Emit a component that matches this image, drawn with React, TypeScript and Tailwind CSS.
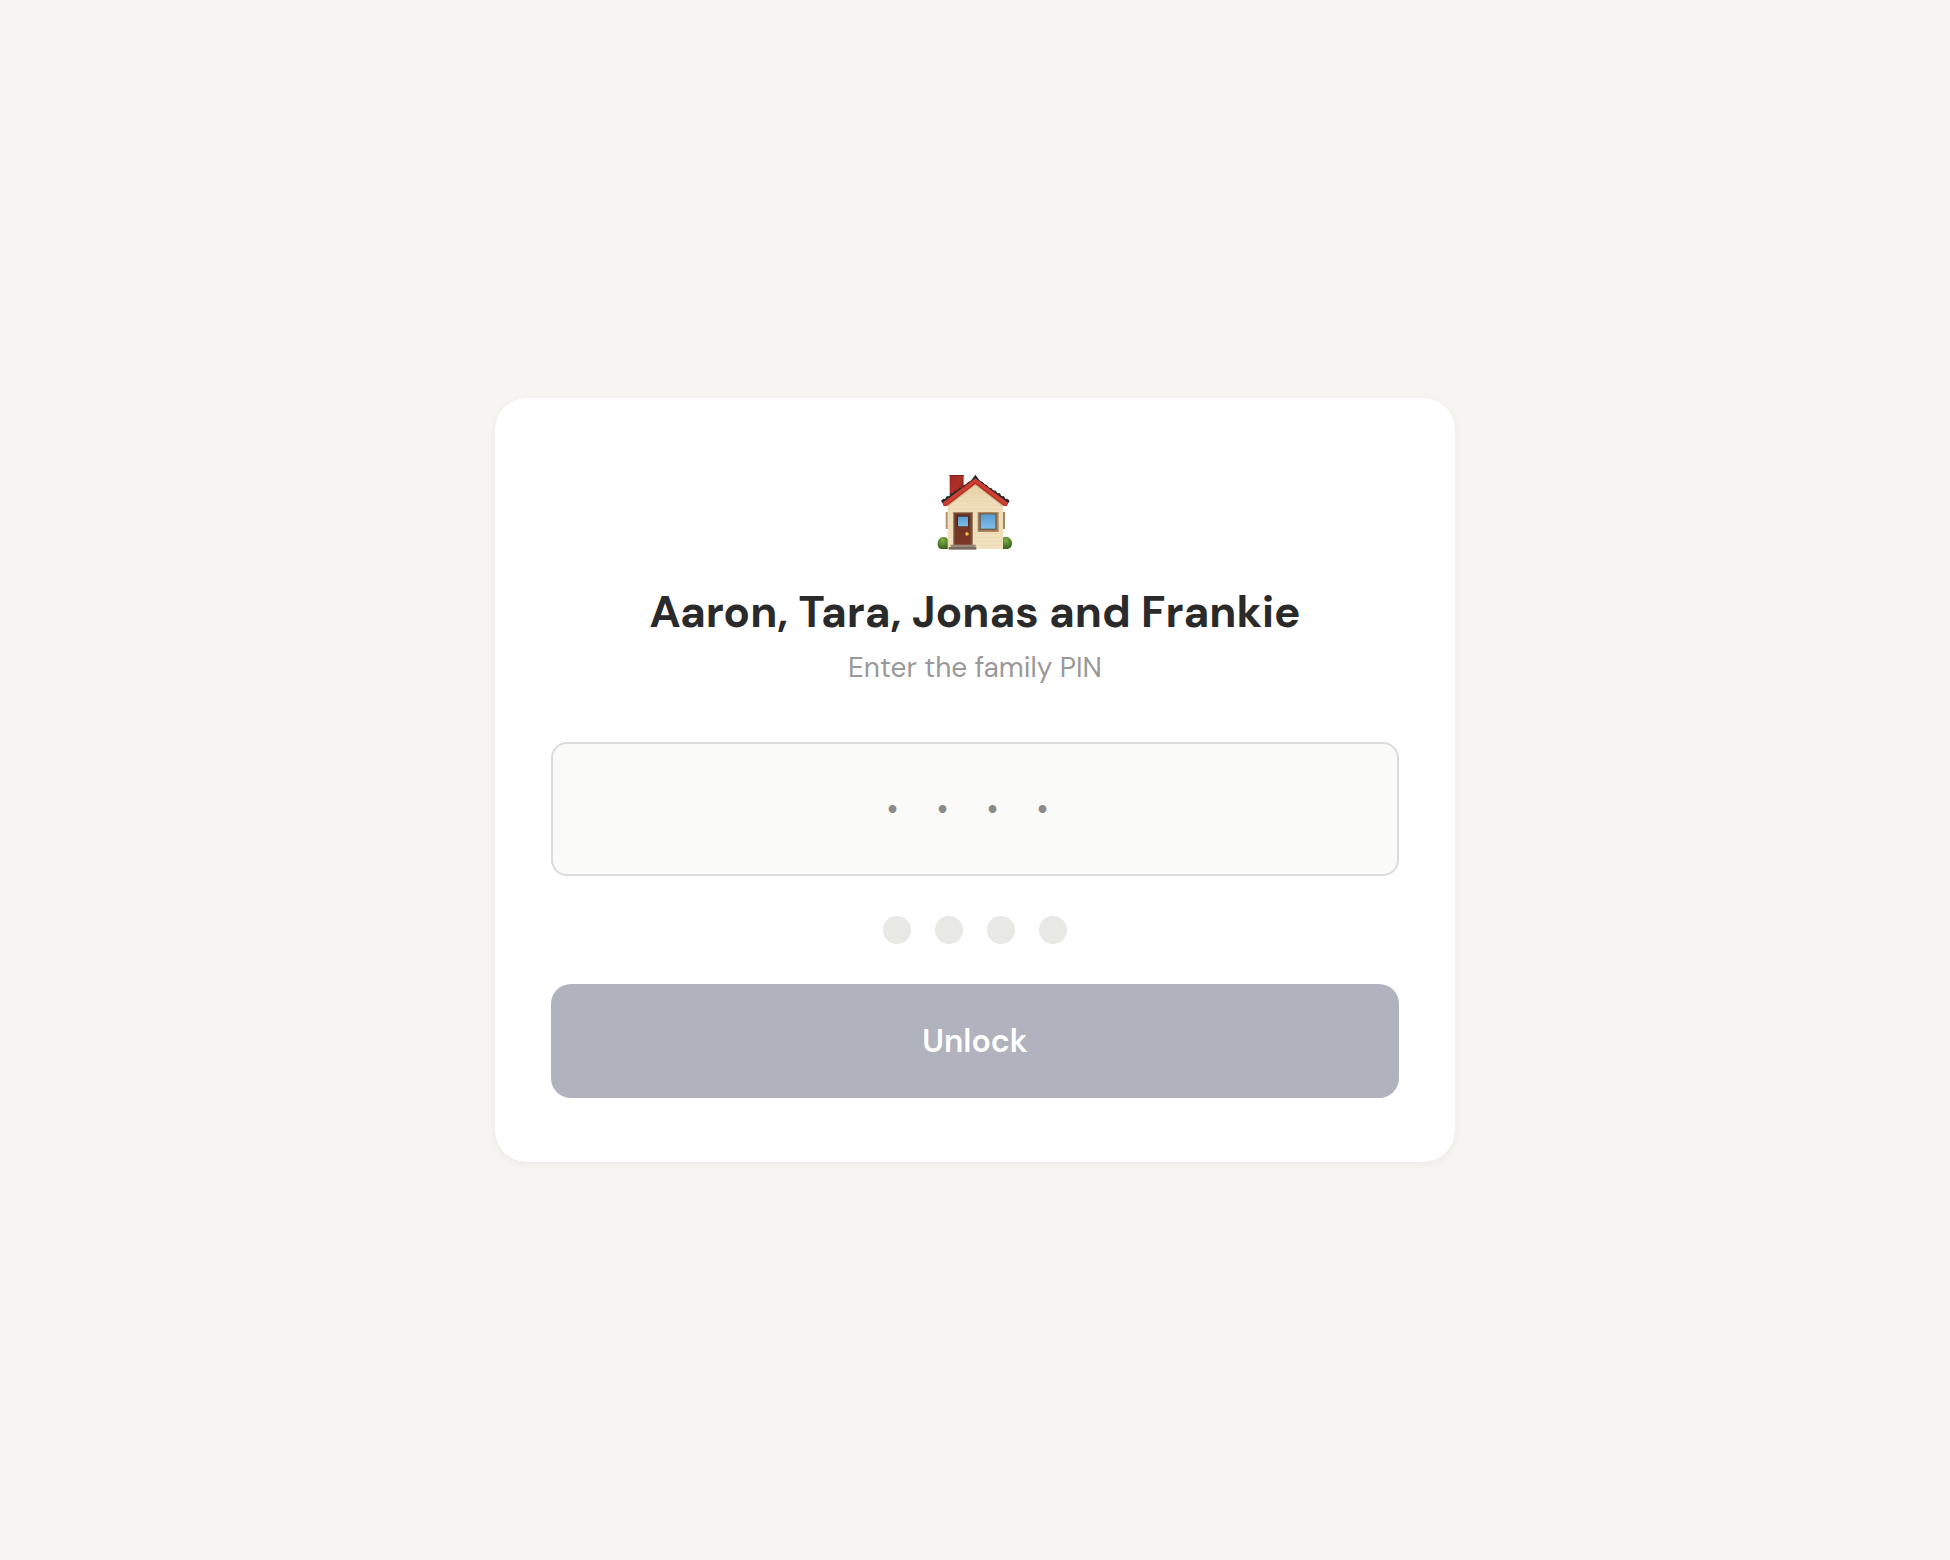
import React, { useState } from 'react';

const PIN_LENGTH = 4;

const HouseIcon: React.FC<{ className?: string }> = ({ className }) => (
  <svg className={className} viewBox="36 42 228 228" aria-hidden="true">
    <defs>
      <linearGradient id="wall" x1="0" y1="0" x2="0" y2="1">
        <stop offset="0" stopColor="#e6cfa4" />
        <stop offset="0.35" stopColor="#f1dfbb" />
        <stop offset="1" stopColor="#f2e1be" />
      </linearGradient>
      <linearGradient id="chimney" x1="0" y1="0" x2="1" y2="1">
        <stop offset="0" stopColor="#9c2824" />
        <stop offset="0.5" stopColor="#b03029" />
        <stop offset="1" stopColor="#7d1f1b" />
      </linearGradient>
      <linearGradient id="glass" x1="0" y1="0" x2="0" y2="1">
        <stop offset="0" stopColor="#5a9bd0" />
        <stop offset="1" stopColor="#7fbdea" />
      </linearGradient>
      <linearGradient id="door" x1="0" y1="0" x2="0" y2="1">
        <stop offset="0" stopColor="#6d3022" />
        <stop offset="1" stopColor="#7d3826" />
      </linearGradient>
      <radialGradient id="bush" cx="0.45" cy="0.3" r="0.7">
        <stop offset="0" stopColor="#7eb043" />
        <stop offset="1" stopColor="#36601c" />
      </radialGradient>
    </defs>

    {/* Shutters and bushes */}
    <rect x="62" y="156" width="8" height="51" fill="#b09674" />
    <rect x="232" y="156" width="8" height="51" fill="#a08463" />
    <path d="M38 252c0-12 7-21 17-21 9 0 15 6 17 14v22H48c-7-1-10-7-10-15z" fill="url(#bush)" />
    <path d="M228 240c3-6 8-10 14-10 11 0 19 9 19 20 0 10-5 16-13 17h-20z" fill="url(#bush)" />

    {/* Chimney and wall */}
    <rect x="74" y="46" width="42" height="58" fill="url(#chimney)" />
    <path d="M73 45h44v3H73z" fill="#7a211d" />
    <path d="M68 132l83-67 83 67v135H68z" fill="url(#wall)" />
    <path
      d="M68 148h166M68 160h166M68 172h166M68 184h166M68 196h166M68 208h166M68 220h166M68 232h166M68 244h166M68 256h166M84 136h134M98 124h106M112 112h78M126 100h50"
      stroke="#d9bf92"
      strokeOpacity="0.4"
      strokeWidth="1.5"
      fill="none"
    />
    <path d="M68 134l83-68 83 68v7l-83-65-83 65z" fill="#b08d5e" opacity="0.45" />

    {/* Roof */}
    <path d="M51 126L151 52l100 74-5 12h-9L151 72l-86 66h-9z" fill="#b02c25" />
    <path d="M53 128L151 54l98 74-4 7h-7L151 67 64 135h-7z" fill="#d03e31" />
    <path
      d="M48 122l7-6 5 1 5-8 8-1 4-8 8-1 5-7 8-1 5-7 8-1 5-8 8-2 5-7 8-2 5-8 9-12 9 12 5 8 8 2 5 7 8 2 5 8 8 1 5 7 8 1 5 7 8 1 4 8 8 1 5 8 5-1 7 6-4 7-99-74-99 74z"
      fill="#2a2c2e"
    />

    {/* Door */}
    <rect x="84" y="156" width="60" height="102" fill="#a38262" />
    <rect x="87" y="159" width="54" height="99" fill="#735039" />
    <rect x="90" y="162" width="46" height="94" fill="url(#door)" />
    <rect x="96" y="167" width="35" height="34" fill="#4a2118" />
    <rect x="99" y="170" width="30" height="29" fill="url(#glass)" />
    <circle cx="126" cy="222" r="5.5" fill="#edb22d" />
    <circle cx="125" cy="220" r="2.5" fill="#ffdf71" />
    <rect x="77" y="254" width="75" height="8" fill="#9a887a" />
    <rect x="71" y="261" width="83" height="8" fill="#786a61" />

    {/* Window */}
    <rect x="158" y="156" width="63" height="60" rx="2" fill="#a98863" />
    <rect x="161" y="159" width="55" height="52" fill="#8b6846" />
    <rect x="165" y="162" width="47" height="46" fill="#5f4c3b" />
    <rect x="167" y="163" width="44" height="43" fill="url(#glass)" />
  </svg>
);

const App: React.FC = () => {
  const [pin, setPin] = useState('');
  const isComplete = pin.length === PIN_LENGTH;

  return (
    <main className="min-h-screen flex items-center justify-center bg-[#f6f5f1] p-4 font-['DM_Sans',Inter,sans-serif]">
      <form
        onSubmit={(e) => e.preventDefault()}
        className="w-full max-w-[960px] bg-white rounded-[32px] px-14 pt-[76px] pb-16 flex flex-col items-center shadow-[0_2px_8px_rgba(0,0,0,0.05)]"
      >
        <HouseIcon className="w-[76px] h-[76px]" />
        <h1 className="mt-8 text-[44px] leading-[60px] font-bold text-[#2a2a2a] text-center">
          Aaron, Tara, Jonas and Frankie
        </h1>
        <label htmlFor="pin" className="mt-1 text-[28px] leading-[44px] text-[#999999]">
          Enter the family PIN
        </label>

        <input
          id="pin"
          type="password"
          inputMode="numeric"
          maxLength={PIN_LENGTH}
          value={pin}
          onChange={(e) => setPin(e.target.value.replace(/\D/g, ''))}
          placeholder="• • • •"
          className="mt-[52px] w-full h-[134px] rounded-2xl border-2 border-[#dcdcda] bg-[#fafaf8] text-center text-[32px] tracking-[15px] text-[#2a2a2a] placeholder:text-[#8a8a88] outline-none"
        />

        <div className="my-10 flex gap-6">
          {Array.from({ length: PIN_LENGTH }, (_, i) => (
            <span
              key={i}
              className={`w-7 h-7 rounded-full ${i < pin.length ? 'bg-[#2d3154]' : 'bg-[#e8e8e4]'}`}
            />
          ))}
        </div>

        <button
          type="submit"
          disabled={!isComplete}
          className="w-full h-[114px] rounded-[20px] bg-[#2d3154] disabled:bg-[#b0b2be] text-[32px] font-semibold text-white"
        >
          Unlock
        </button>
      </form>
    </main>
  );
};

export default App;
